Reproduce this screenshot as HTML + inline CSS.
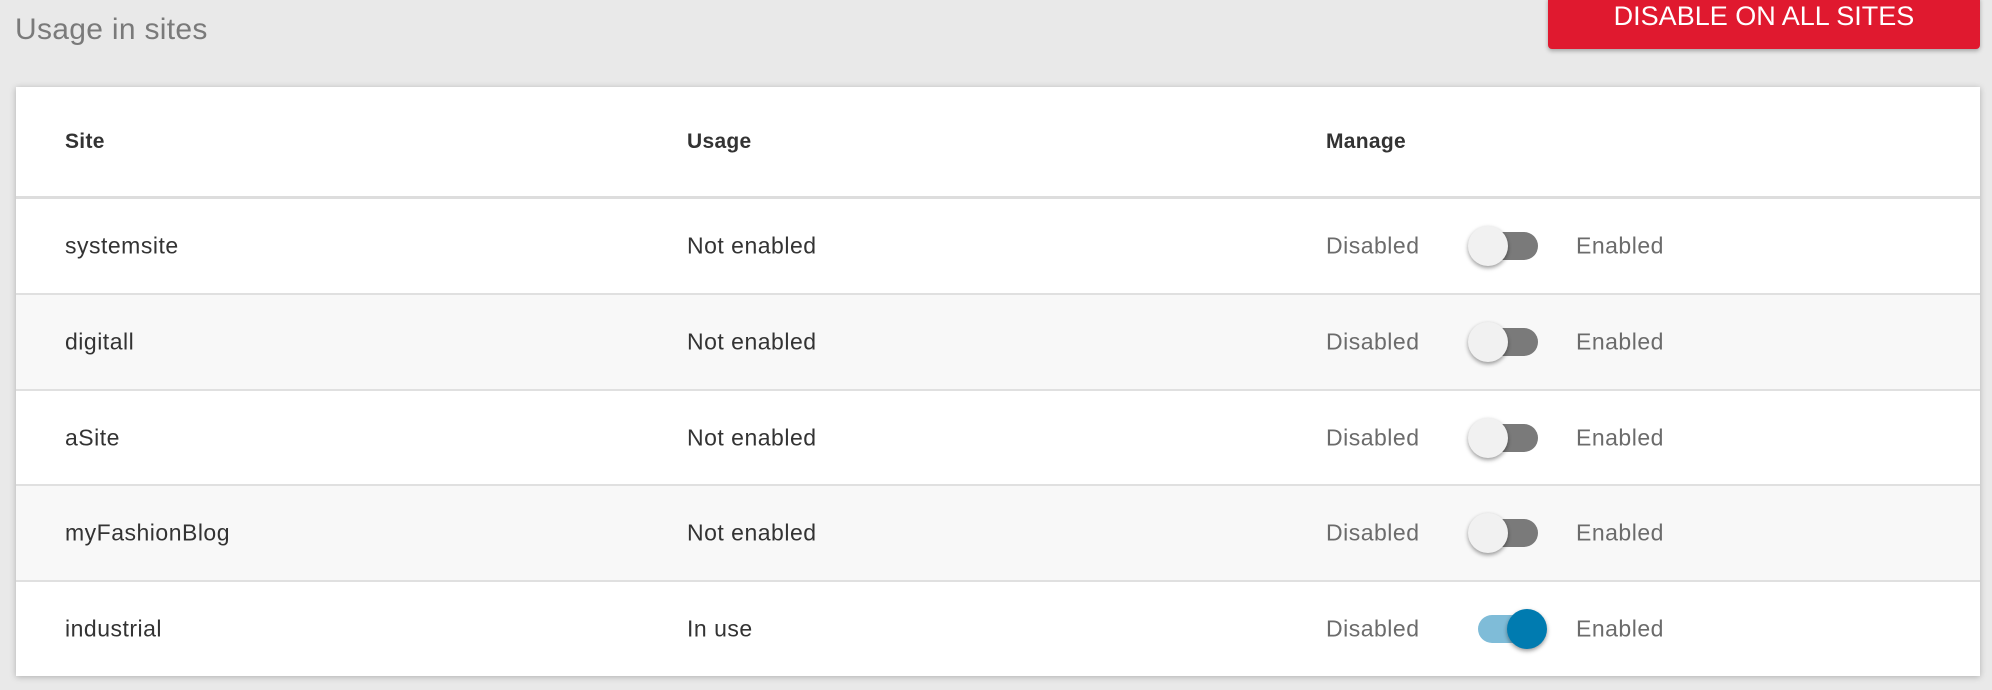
<!DOCTYPE html>
<html><head><style>
body{margin:0;width:1992px;height:690px;background:#e9e9e9;font-family:"Liberation Sans",sans-serif;position:relative;overflow:hidden}
.title{position:absolute;left:15px;top:13px;font-size:30px;color:#7a7a7a;letter-spacing:0.3px}
.btn{position:absolute;left:1548px;top:-4px;width:432px;height:53px;background:#e0192f;border-radius:4px;box-shadow:0 2px 4px rgba(0,0,0,.3);color:#fff;font-size:27px;text-align:center;line-height:40px}
.card{position:absolute;left:16px;top:87px;width:1964px;height:589px;background:#fff;box-shadow:0 1px 6px rgba(0,0,0,.25)}
.row{position:absolute;left:0;width:100%;border-top:2px solid #e0e0e0}
.hdr{top:0;height:109px;border-top:none;border-bottom:4px solid #ddd;font-weight:bold;font-size:21px;color:#333;letter-spacing:0.3px}
.c{position:absolute;top:50%;transform:translateY(-50%)}
.r{height:94px;font-size:23px;color:#333;letter-spacing:0.5px}
.g{color:#6b6b6b}
.track{position:absolute;left:1462px;top:50%;margin-top:-14px;width:60px;height:28px;border-radius:14px;background:#7a7a7a}
.thumb{position:absolute;left:1452px;top:50%;margin-top:-20px;width:40px;height:40px;border-radius:50%;background:#f1f1f1;box-shadow:0 2px 4px rgba(0,0,0,.4)}
.on .track{background:#7fbcd8}
.on .thumb{left:1491px;background:#007bb0}
</style></head><body>
<div class="title">Usage in sites</div>
<div class="btn">DISABLE ON ALL SITES</div>
<div class="card">
<div class="row hdr"><span class="c" style="left:49px">Site</span><span class="c" style="left:671px">Usage</span><span class="c" style="left:1310px">Manage</span></div>
<div class="row r" style="top:112px;background:#fff;border-top:none"><span class="c" style="left:49px">systemsite</span><span class="c" style="left:671px">Not enabled</span><span class="c g" style="left:1310px">Disabled</span><div class="track"></div><div class="thumb"></div><span class="c g" style="left:1560px">Enabled</span></div>
<div class="row r" style="top:206px;background:#f8f8f8"><span class="c" style="left:49px">digitall</span><span class="c" style="left:671px">Not enabled</span><span class="c g" style="left:1310px">Disabled</span><div class="track"></div><div class="thumb"></div><span class="c g" style="left:1560px">Enabled</span></div>
<div class="row r" style="top:302px;background:#fff"><span class="c" style="left:49px">aSite</span><span class="c" style="left:671px">Not enabled</span><span class="c g" style="left:1310px">Disabled</span><div class="track"></div><div class="thumb"></div><span class="c g" style="left:1560px">Enabled</span></div>
<div class="row r" style="top:397px;background:#f8f8f8"><span class="c" style="left:49px">myFashionBlog</span><span class="c" style="left:671px">Not enabled</span><span class="c g" style="left:1310px">Disabled</span><div class="track"></div><div class="thumb"></div><span class="c g" style="left:1560px">Enabled</span></div>
<div class="row r on" style="top:493px;background:#fff"><span class="c" style="left:49px">industrial</span><span class="c" style="left:671px">In use</span><span class="c g" style="left:1310px">Disabled</span><div class="track"></div><div class="thumb"></div><span class="c g" style="left:1560px">Enabled</span></div>
</div>
</body></html>
